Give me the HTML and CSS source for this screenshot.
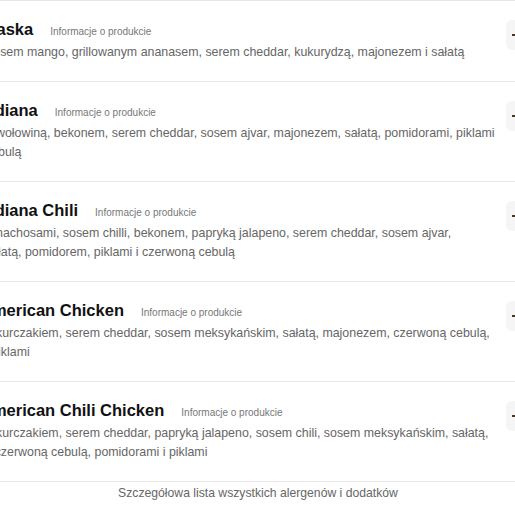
FILE: index.html
```html
<!DOCTYPE html>
<html lang="pl">
<head>
  <meta charset="UTF-8">
  <meta name="viewport" content="width=device-width,initial-scale=1">
  <title>Burgery</title>
  <link rel="stylesheet" href="styles.css">
</head>
<body>
  <div class="menu">
    <!-- lista produktów -->
    <div class="item">
      <div class="info">
        <div class="head"><h3>Alaska</h3><a href="#" class="more">Informacje o produkcie</a></div>
        <p class="desc">Sosem mango, grillowanym ananasem, serem cheddar, kukurydzą, majonezem i sałatą</p>
      </div>
      <button class="add"><svg width="12" height="12" viewBox="0 0 12 12"><path d="M0 6h12M6 0v12" stroke="currentColor" stroke-width="2"/></svg></button>
    </div>

    <div class="item">
      <div class="info">
        <div class="head"><h3>Indiana</h3><a href="#" class="more">Informacje o produkcie</a></div>
        <p class="desc">Z wołowiną, bekonem, serem cheddar, sosem ajvar, majonezem, sałatą, pomidorami, piklami<br>cebulą</p>
      </div>
      <button class="add"><svg width="12" height="12" viewBox="0 0 12 12"><path d="M0 6h12M6 0v12" stroke="currentColor" stroke-width="2"/></svg></button>
    </div>

    <div class="item">
      <div class="info">
        <div class="head"><h3>Indiana Chili</h3><a href="#" class="more">Informacje o produkcie</a></div>
        <p class="desc">Z nachosami, sosem chilli, bekonem, papryką jalapeno, serem cheddar, sosem ajvar,<br>sałatą, pomidorem, piklami i czerwoną cebulą</p>
      </div>
      <button class="add"><svg width="12" height="12" viewBox="0 0 12 12"><path d="M0 6h12M6 0v12" stroke="currentColor" stroke-width="2"/></svg></button>
    </div>

    <div class="item">
      <div class="info">
        <div class="head"><h3>American Chicken</h3><a href="#" class="more">Informacje o produkcie</a></div>
        <p class="desc">Z kurczakiem, serem cheddar, sosem meksykańskim, sałatą, majonezem, czerwoną cebulą,<br>i piklami</p>
      </div>
      <button class="add"><svg width="12" height="12" viewBox="0 0 12 12"><path d="M0 6h12M6 0v12" stroke="currentColor" stroke-width="2"/></svg></button>
    </div>

    <div class="item">
      <div class="info">
        <div class="head"><h3>American Chili Chicken</h3><a href="#" class="more">Informacje o produkcie</a></div>
        <p class="desc">Z kurczakiem, serem cheddar, papryką jalapeno, sosem chili, sosem meksykańskim, sałatą,<br>z czerwoną cebulą, pomidorami i piklami</p>
      </div>
      <button class="add"><svg width="12" height="12" viewBox="0 0 12 12"><path d="M0 6h12M6 0v12" stroke="currentColor" stroke-width="2"/></svg></button>
    </div>

    <a href="#" class="allergens">Szczegółowa lista wszystkich alergenów i dodatków</a>
  </div>
</body>
</html>
```

FILE: styles.css
```css
body { margin: 0; background: #fff; font-family: "Liberation Sans", Arial, sans-serif; color: #111; overflow: hidden; }
.menu { width: 580px; margin-left: -17px; border-top: 1px solid #e6e6e6; }
.item { display: flex; align-items: flex-start; padding: 16px 0 19px; border-bottom: 1px solid #e6e6e6; }
.info { flex: 1; min-width: 0; }
.head { display: flex; align-items: baseline; gap: 17px; margin-left: -3px; }
.head h3 { margin: 0; font-size: 16.5px; line-height: 24px; font-weight: bold; color: #111; }
.more { font-size: 10px; color: #777; text-decoration: none; }
.desc { margin: 2px 0 0 2px; font-size: 12.4px; line-height: 19px; color: #666; white-space: nowrap; }
.add {
  flex: none;
  display: flex;
  align-items: center;
  width: 40px;
  height: 30px;
  margin: 3px 17px 0 0;
  padding: 0 0 0 6px;
  border: none;
  border-radius: 6px;
  background: #f5f5f5;
  color: #4a3520;
}
.allergens { display: block; width: 550px; padding-top: 2px; text-align: center; font-size: 12.2px; line-height: 18px; color: #666; text-decoration: none; }
```
